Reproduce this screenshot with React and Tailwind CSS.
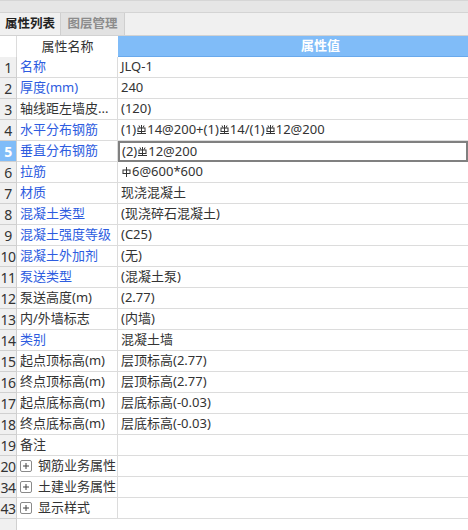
import React from 'react';

const BLUE = 'text-[#2d5ce0]';

function Rebar({ grade = 3 }) {
  return (
    <svg
      width="9"
      height="10"
      viewBox="0 0 9 10"
      className="inline-block align-[4px] mx-[1px]"
      fill="none"
      stroke="#333"
      strokeWidth="1"
    >
      <line x1="4.5" y1="0" x2="4.5" y2={grade === 3 ? 8 : 10} />
      <rect x="1" y="3" width="7" height="3.5" />
      {grade === 3 && (
        <>
          <line x1="2" y1="0.5" x2="2.8" y2="2.5" />
          <line x1="7" y1="0.5" x2="6.2" y2="2.5" />
          <line x1="0" y1="8.5" x2="9" y2="8.5" />
        </>
      )}
    </svg>
  );
}

const rows = [
  { n: 1, name: '名称', blue: true, value: 'JLQ-1' },
  { n: 2, name: '厚度(mm)', blue: true, value: '240' },
  { n: 3, name: '轴线距左墙皮...', value: '(120)' },
  {
    n: 4,
    name: '水平分布钢筋',
    blue: true,
    value: (
      <>
        (1)<Rebar />14@200+(1)<Rebar />14/(1)<Rebar />12@200
      </>
    ),
  },
  {
    n: 5,
    name: '垂直分布钢筋',
    blue: true,
    selected: true,
    value: (
      <>
        (2)<Rebar />12@200
      </>
    ),
  },
  {
    n: 6,
    name: '拉筋',
    blue: true,
    value: (
      <>
        <Rebar grade={1} />6@600*600
      </>
    ),
  },
  { n: 7, name: '材质', blue: true, value: '现浇混凝土' },
  { n: 8, name: '混凝土类型', blue: true, value: '(现浇碎石混凝土)' },
  { n: 9, name: '混凝土强度等级', blue: true, value: '(C25)' },
  { n: 10, name: '混凝土外加剂', blue: true, value: '(无)' },
  { n: 11, name: '泵送类型', blue: true, value: '(混凝土泵)' },
  { n: 12, name: '泵送高度(m)', value: '(2.77)' },
  { n: 13, name: '内/外墙标志', value: '(内墙)' },
  { n: 14, name: '类别', blue: true, value: '混凝土墙' },
  { n: 15, name: '起点顶标高(m)', value: '层顶标高(2.77)' },
  { n: 16, name: '终点顶标高(m)', value: '层顶标高(2.77)' },
  { n: 17, name: '起点底标高(m)', value: '层底标高(-0.03)' },
  { n: 18, name: '终点底标高(m)', value: '层底标高(-0.03)' },
  { n: 19, name: '备注', value: '' },
  { n: 20, name: '钢筋业务属性', group: true },
  { n: 34, name: '土建业务属性', group: true },
  { n: 43, name: '显示样式', group: true },
];

function PlusBox() {
  return (
    <span className="inline-flex w-[12px] h-[12px] items-center justify-center border border-[#8a8a8a] rounded-[2px] mr-[6px] bg-white">
      <svg width="8" height="8" viewBox="0 0 8 8" stroke="#444" strokeWidth="1">
        <line x1="4" y1="1" x2="4" y2="7" />
        <line x1="1" y1="4" x2="7" y2="4" />
      </svg>
    </span>
  );
}

export default function App() {
  return (
    <div
      className="w-[468px] h-[530px] overflow-hidden bg-white text-[#333] flex flex-col"
      style={{ fontFamily: '"Noto Sans", "Noto Sans CJK SC", sans-serif' }}
    >
      {/* top strip */}
      <div className="h-[13px] shrink-0 bg-[#e6e6e6] border-t border-[#d6d6d6] border-b border-b-[#d4d4d4]" />

      {/* tabs */}
      <div className="h-[23px] shrink-0 bg-[#f0f0f0] border-b border-[#d2d2d2] flex items-stretch text-[12.5px] font-bold">
        <div className="w-[60px] flex items-center justify-center text-[#222]">属性列表</div>
        <div className="w-[65px] flex items-center justify-center bg-[#e2e2e2] border-x border-[#cfcfcf] text-[#8c8c8c]">
          图层管理
        </div>
      </div>

      {/* header */}
      <div className="h-[21px] shrink-0 grid grid-cols-[17px_101px_1fr] text-[13px]">
        <div className="bg-white border-r border-[#dcdcdc]" />
        <div className="bg-white flex items-center justify-center">属性名称</div>
        <div className="bg-[#80bcf8] border-b border-[#69a9ec] text-white font-bold flex items-center pl-[183px]">
          属性值
        </div>
      </div>

      {/* rows */}
      <div className="flex-1 grid grid-cols-[17px_101px_1fr] auto-rows-[21px] content-start text-[13px] relative">
        {rows.map((r) => (
          <React.Fragment key={r.n}>
            <div
              className={`border-r border-b border-[#d0d0d0] flex items-center justify-center text-[14px] tracking-[-0.5px] ${
                r.selected ? 'bg-[#80bcf8] text-white font-bold' : 'bg-[#f0f0f0] text-[#333]'
              }`}
            >
              {r.n}
            </div>
            <div
              className={`border-r border-b border-[#dcdcdc] flex items-center pl-[3px] whitespace-nowrap overflow-hidden ${
                r.blue ? BLUE : 'text-[#333]'
              }`}
            >
              {r.group ? (
                <>
                  <PlusBox />
                  {r.name}
                </>
              ) : (
                r.name
              )}
            </div>
            <div
              className={`flex items-center whitespace-nowrap overflow-hidden ${
                r.selected ? 'border-2 border-[#808080] pl-[2px]' : 'border-b border-[#dcdcdc] pl-[3px]'
              }`}
            >
              {r.value}
            </div>
          </React.Fragment>
        ))}
        <div className="bg-[#f0f0f0] border-r border-[#d0d0d0] h-[40px]" />
      </div>
    </div>
  );
}
